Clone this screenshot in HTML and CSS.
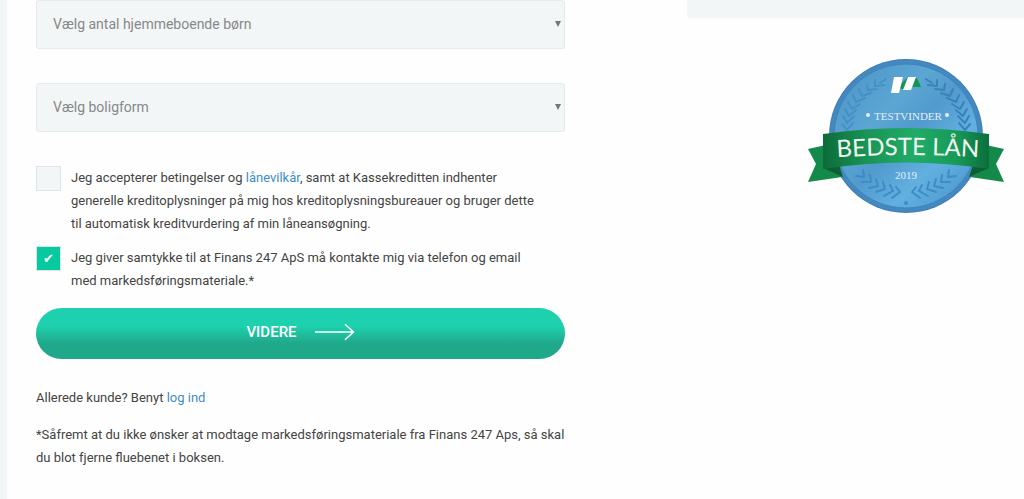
FILE: index.html
```html
<!DOCTYPE html>
<html lang="da">
  <head>
    <meta charset="UTF-8" />
    <meta name="viewport" content="width=device-width, initial-scale=1.0" />
    <title>Ansøg om lån</title>
    <link rel="stylesheet" href="styles.css">
  </head>
  <body>
    <main class="page">
      <form class="loan-form">
        <div class="select-box">
          <select name="children" aria-label="Vælg antal hjemmeboende børn">
            <option>Vælg antal hjemmeboende børn</option>
          </select>
        </div>
        <div class="select-box">
          <select name="housing" aria-label="Vælg boligform">
            <option>Vælg boligform</option>
          </select>
        </div>

        <div class="checks">
          <div class="check">
            <input type="checkbox" id="terms" />
            <label for="terms">Jeg accepterer betingelser og <a href="#">lånevilkår</a>, samt at Kassekreditten indhenter<br />
              generelle kreditoplysninger på mig hos kreditoplysningsbureauer og bruger dette<br />
              til automatisk kreditvurdering af min låneansøgning.</label>
          </div>
          <div class="check">
            <input type="checkbox" id="consent" checked />
            <label for="consent">Jeg giver samtykke til at Finans 247 ApS må kontakte mig via telefon og email<br />
              med markedsføringsmateriale.*</label>
          </div>
        </div>

        <button type="submit" class="next">
          VIDERE
          <svg width="40" height="18" viewBox="0 0 40 18" fill="none" stroke="#fff" stroke-width="1.5">
            <path d="M0 9H38.500M30 1.200L38.500 9L30 16.800" />
          </svg>
        </button>

        <p class="login">Allerede kunde? Benyt <a href="#">log ind</a></p>
        <p class="note">*Såfremt at du ikke ønsker at modtage markedsføringsmateriale fra Finans 247 Aps, så skal<br />
          du blot fjerne fluebenet i boksen.</p>
      </form>

      <aside class="side">
        <div class="panel"></div>
        <svg class="badge" width="196" height="154" viewBox="0 0 196 154" role="img" aria-label="Testvinder, bedste lån 2019">
          <defs>
            <linearGradient id="disc" x1="0" y1="0" x2="1" y2="1">
              <stop offset="0" stop-color="#4b94c8" />
              <stop offset="0.350" stop-color="#5ba6d3" />
              <stop offset="0.500" stop-color="#519acd" />
              <stop offset="0.700" stop-color="#62b0e0" />
              <stop offset="1" stop-color="#458fc9" />
            </linearGradient>
            <linearGradient id="ribbon" x1="0" y1="0" x2="1" y2="0">
              <stop offset="0" stop-color="#0c6b39" />
              <stop offset="0.250" stop-color="#189353" />
              <stop offset="0.550" stop-color="#21ab68" />
              <stop offset="0.800" stop-color="#189a59" />
              <stop offset="1" stop-color="#0b6f3c" />
            </linearGradient>
            <!-- laurel branches for the left side, mirrored for the right -->
            <g id="laurel" fill="none" stroke-width="2" stroke-linecap="round">
              <path d="M39 71L34 65M39 71L45 64M39 64L35 57M39 64L46 57M41 57L37 50M41 57L48 51M44 50L40 43M44 50L52 45M48 43L45 36M48 43L57 39M54 37L51 30M54 37L63 34M60 31L59 25M60 31L69 30M67 27L67 21M67 27L76 26M72 24L78 20" />
            </g>
            <g id="laurel-low" fill="none" stroke-width="2" stroke-linecap="round">
              <path d="M56 118L55 111M56 118L48 117M63 123L62 116M63 123L54 123M70 127L68 120M70 127L61 129M77 130L75 123M77 130L68 133M85 132L82 126M85 132L76 137M92 133L88 128M92 133L84 139" />
            </g>
          </defs>
          <circle cx="98" cy="77" r="77" fill="#3f7fb6" />
          <circle cx="98" cy="77" r="76" fill="#4389c0" />
          <circle cx="98" cy="77" r="72" fill="url(#disc)" stroke="#4084bb" />
          <use href="#laurel" stroke="#4590c5" />
          <use href="#laurel" stroke="#3b82b9" transform="matrix(-1 0 0 1 196 0)" />
          <use href="#laurel-low" stroke="#3d8cc6" />
          <use href="#laurel-low" stroke="#3d8cc6" transform="matrix(-1 0 0 1 196 0)" />
          <path d="M94 24L100 18L98 31L91 29Z" fill="#15964f" />
          <path d="M107 19H109L113 28H104Z" fill="#15964f" />
          <path d="M86 18H95L91 34H83Z" fill="#fff" />
          <path d="M100 18H108L103 31H95Z" fill="#fff" />
          <text x="100" y="61" class="badge-small">TESTVINDER</text>
          <circle cx="60" cy="56" r="2" fill="#e3eef8" />
          <circle cx="139" cy="56" r="2" fill="#e3eef8" />
          <path d="M0 90L18 86L34 118L0 123L8 105Z" fill="#138a4a" />
          <path d="M196 90L178 86L162 118L196 123L188 105Z" fill="#138a4a" />
          <path d="M15 109L31 106L35 118Z" fill="#0b5f33" />
          <path d="M181 109L165 106L161 118Z" fill="#0b5f33" />
          <path d="M15 75Q98 63 181 75V110Q98 97 15 110Z" fill="url(#ribbon)" />
          <path id="arch" d="M20 99Q98 93 180 99" fill="none" />
          <text class="badge-title"><textPath href="#arch" startOffset="50%">BEDSTE LÅN</textPath></text>
          <text x="98" y="120" class="badge-small">2019</text>
          <circle cx="98" cy="144" r="2" fill="#3d8cc6" />
        </svg>
      </aside>
    </main>
  </body>
</html>
```
FILE: styles.css
```css
* {
  box-sizing: border-box;
}

body {
  margin: 0;
  min-height: 100vh;
  border-left: 7px solid #f2f6f7;
  background: #fefefe;
  color: #444;
  font-family: Roboto, sans-serif;
  font-size: 13px;
  line-height: 23px;
}

a {
  color: #428bca;
  text-decoration: none;
}

p {
  margin: 0;
}

.page {
  display: grid;
  grid-template-columns: 529fr 337fr;
  gap: 122px;
  padding-left: 29px;
}

.loan-form {
  display: flex;
  flex-direction: column;
}

.select-box {
  position: relative;
  margin-bottom: 34px;
}

.select-box::after {
  content: "";
  position: absolute;
  top: 21px;
  right: 4px;
  border: 3px solid transparent;
  border-top: 6px solid #777;
  border-bottom: 0;
  pointer-events: none;
}

.select-box select {
  display: block;
  width: 100%;
  height: 49px;
  padding: 0 16px 2px;
  border: 1px solid #e6eaea;
  border-radius: 3px;
  background: #f2f6f7;
  color: #888;
  font-family: inherit;
  font-size: 14px;
  appearance: none;
}

.checks {
  display: flex;
  flex-direction: column;
  gap: 11px;
  margin-bottom: 16px;
}

.check {
  display: flex;
  align-items: flex-start;
  gap: 10px;
}

.check input {
  flex: none;
  display: grid;
  place-items: center;
  width: 25px;
  height: 25px;
  margin: 0;
  border: 1px solid #dfe5e6;
  background: #f2f6f7;
  appearance: none;
}

.check input:checked {
  background: #07c99f;
}

.check input:checked::before {
  content: "✔";
  color: #fff;
  font-family: "DejaVu Sans", sans-serif;
  font-size: 13px;
  line-height: 23px;
}

.next {
  display: flex;
  align-items: center;
  justify-content: center;
  gap: 18px;
  height: 51px;
  margin-bottom: 27px;
  padding-bottom: 4px;
  border: 0;
  border-radius: 26px;
  background: linear-gradient(#1dd1ae 35%, #20a88b 70%);
  color: #fff;
  font-family: inherit;
  font-size: 15px;
  font-weight: 500;
}

.login {
  margin-bottom: 14px;
}

.panel {
  height: 18px;
  border-radius: 0 0 0 3px;
  background: #f2f6f7;
}

.badge {
  display: block;
  margin: 41px 20px 0 auto;
}

.badge-small {
  fill: #e3eef8;
  font-family: "Liberation Serif", serif;
  font-size: 11px;
  text-anchor: middle;
}

.badge-title {
  fill: #f0f7f0;
  font-family: Lato, sans-serif;
  font-size: 24px;
  text-anchor: middle;
}
```
